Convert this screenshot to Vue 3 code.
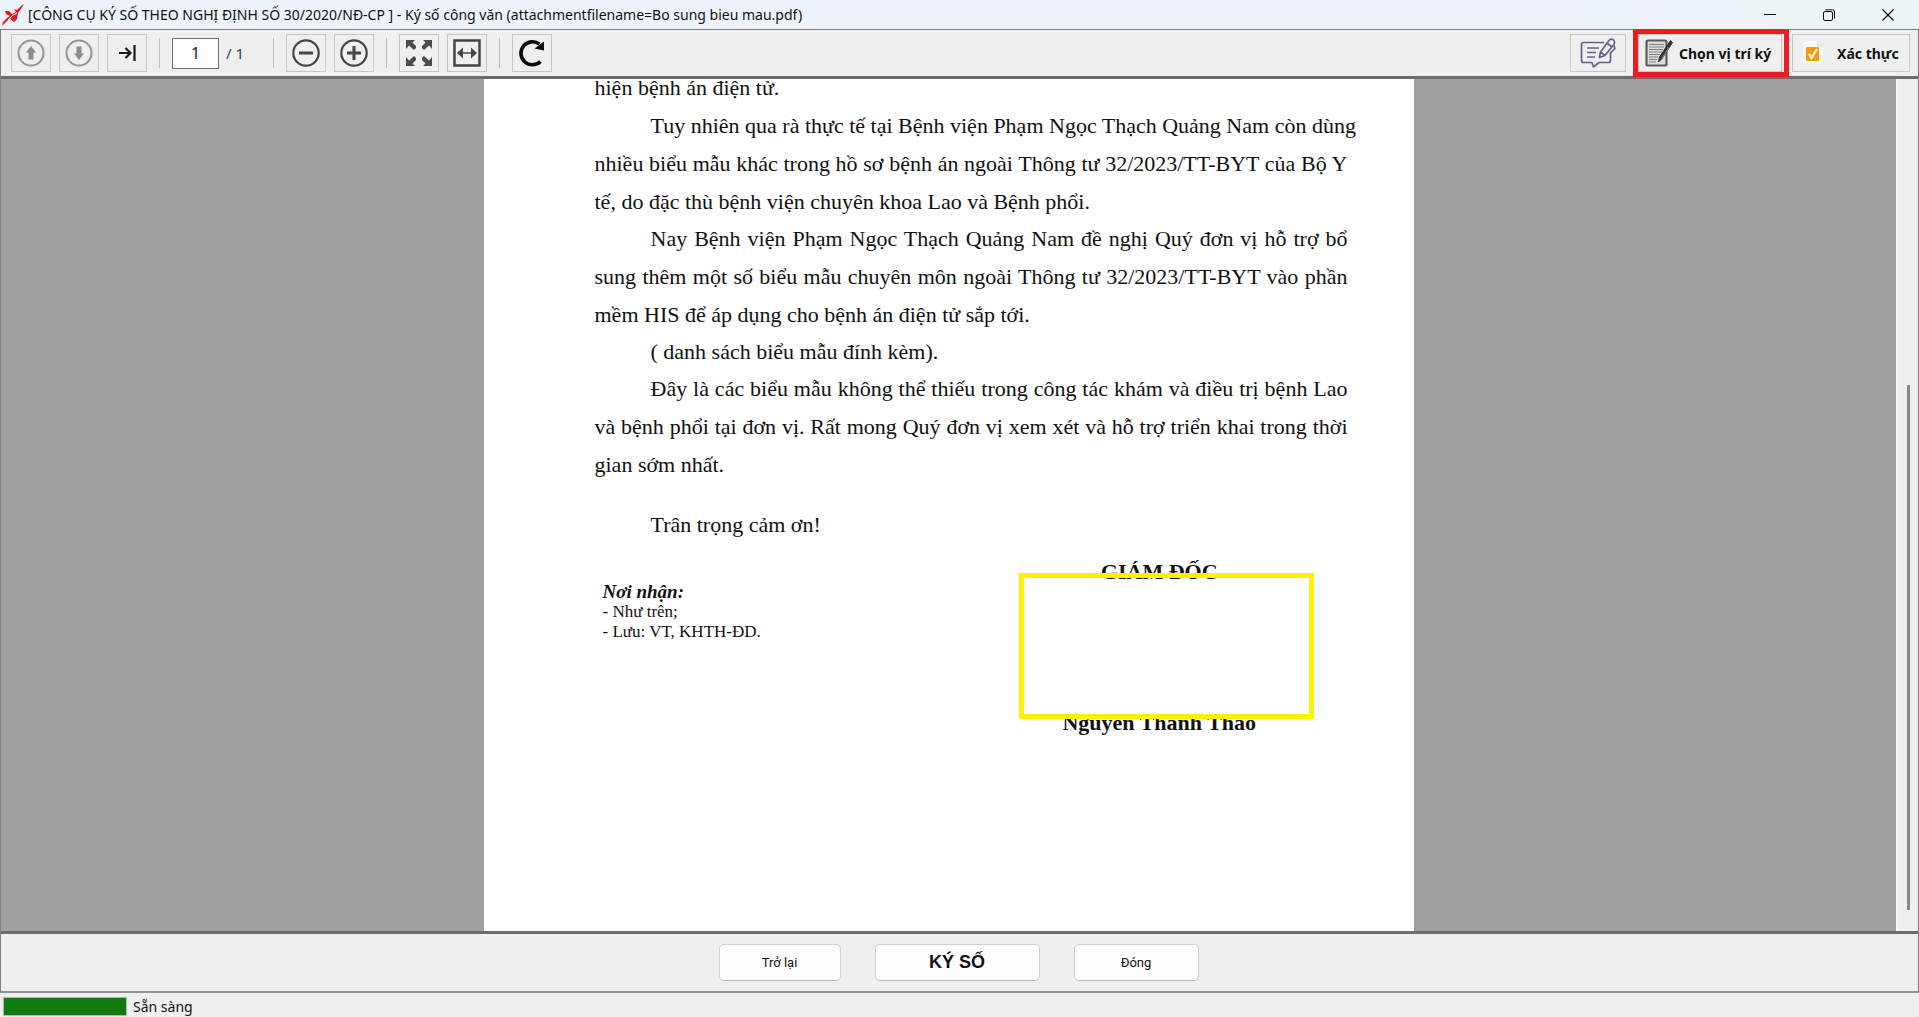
<script setup>
import { ref } from 'vue'

const page = ref('1')

const paragraphs = [
  [
    'Tuy nhiên qua rà thực tế tại Bệnh viện Phạm Ngọc Thạch Quảng Nam còn dùng',
    'nhiều biểu mẫu khác trong hồ sơ bệnh án ngoài Thông tư 32/2023/TT-BYT của Bộ Y',
    'tế, do đặc thù bệnh viện chuyên khoa Lao và Bệnh phổi.'
  ],
  [
    'Nay Bệnh viện Phạm Ngọc Thạch Quảng Nam đề nghị Quý đơn vị hỗ trợ bổ',
    'sung thêm một số biểu mẫu chuyên môn ngoài Thông tư 32/2023/TT-BYT vào phần',
    'mềm HIS để áp dụng cho bệnh án điện tử sắp tới.'
  ],
  ['( danh sách biểu mẫu đính kèm).'],
  [
    'Đây là các biểu mẫu không thể thiếu trong công tác khám và điều trị bệnh Lao',
    'và bệnh phổi tại đơn vị. Rất mong Quý đơn vị xem xét và hỗ trợ triển khai trong thời',
    'gian sớm nhất.'
  ]
]
</script>

<template>
  <div class="window">
    <header class="titlebar">
      <svg class="logo" width="22" height="24" viewBox="0 0 22 24" aria-hidden="true">
        <path d="M0 23L1 19L5 15L8 13L4 11L3 8L7 8L10 11L14 9L12 6L15 7L19 3L22 1L19 6L16 10L15 16L12 19L9 17L9 15L5 18L1 22Z" fill="#dd1c1c" />
        <path d="M6 17L11 12L15 10" fill="none" stroke="#eef3fa" />
      </svg>
      <h1 class="title">[CÔNG CỤ KÝ SỐ THEO NGHỊ ĐỊNH SỐ 30/2020/NĐ-CP ] - Ký số công văn (attachmentfilename=Bo sung bieu mau.pdf)</h1>
      <div class="controls">
        <button aria-label="Thu nhỏ">
          <svg width="12" height="12" viewBox="0 0 12 12"><path d="M0 5.500H12" stroke="#111" /></svg>
        </button>
        <button aria-label="Khôi phục">
          <svg width="12" height="12" viewBox="0 0 12 12" fill="none" stroke="#111">
            <rect x=".5" y="2.500" width="9" height="9" rx="1.500" />
            <path d="M2.500 .8H9.500Q11.500 .8 11.500 2.800V9.500" />
          </svg>
        </button>
        <button aria-label="Đóng cửa sổ">
          <svg width="12" height="12" viewBox="0 0 12 12"><path d="M.5 .5L11.500 11.500M11.500 .5L.5 11.500" stroke="#111" stroke-width="1.200" /></svg>
        </button>
      </div>
    </header>

    <div class="frame">
      <div class="toolbar">
        <div class="group">
          <button class="tool" aria-label="Trang trước">
            <svg width="28" height="28" viewBox="0 0 28 28">
              <circle cx="14" cy="14" r="12.500" fill="none" stroke="#949494" stroke-width="2" />
              <path d="M14 7L19 13.500H16.500V20.500H11.500V13.500H9Z" fill="#8c8c8c" />
            </svg>
          </button>
          <button class="tool" aria-label="Trang sau">
            <svg width="28" height="28" viewBox="0 0 28 28">
              <circle cx="14" cy="14" r="12.500" fill="none" stroke="#949494" stroke-width="2" />
              <path d="M14 21L19 14.500H16.500V7.500H11.500V14.500H9Z" fill="#8c8c8c" />
            </svg>
          </button>
          <button class="tool" aria-label="Trang cuối">
            <svg width="18" height="16" viewBox="0 0 18 16" fill="none" stroke="#1c1c1c" stroke-width="2.200">
              <path d="M1 8H12M7.500 3L12.500 8L7.500 13M16.500 0V16" />
            </svg>
          </button>
        </div>
        <span class="sep"></span>
        <div class="pager">
          <input v-model="page" class="page-input" aria-label="Số trang" />
          <span>/ 1</span>
        </div>
        <span class="sep"></span>
        <div class="group">
          <button class="tool" aria-label="Thu nhỏ trang">
            <svg width="28" height="28" viewBox="0 0 28 28" fill="none" stroke="#454545">
              <circle cx="14" cy="14" r="12.700" stroke-width="2.200" />
              <path d="M7 14H21" stroke-width="3" />
            </svg>
          </button>
          <button class="tool" aria-label="Phóng to trang">
            <svg width="28" height="28" viewBox="0 0 28 28" fill="none" stroke="#454545">
              <circle cx="14" cy="14" r="12.700" stroke-width="2.200" />
              <path d="M7 14H21M14 7V21" stroke-width="3" />
            </svg>
          </button>
        </div>
        <span class="sep"></span>
        <div class="group">
          <button class="tool" aria-label="Vừa trang">
            <svg width="26" height="26" viewBox="0 0 26 26" fill="#4c4c4c">
              <path d="M0 0H9L6.500 2.500L10 6V8L8 10L3 5.500L0 9Z" />
              <path d="M26 0V9L23 5.500L18 10L16 8V6L19.500 2.500L17 0Z" />
              <path d="M0 26V17L3 20.500L8 16L10 18V20L6.500 23.500L9 26Z" />
              <path d="M26 26H17L19.500 23.500L16 20V18L18 16L23 20.500L26 17Z" />
            </svg>
          </button>
          <button class="tool" aria-label="Vừa chiều rộng">
            <svg width="28" height="28" viewBox="0 0 28 28">
              <rect x="1.500" y="1.500" width="25" height="25" fill="none" stroke="#454545" stroke-width="2.500" />
              <path d="M8 14H20" stroke="#454545" stroke-width="1.500" />
              <path d="M4 14L10 8.500V19.500ZM24 14L18 8.500V19.500Z" fill="#454545" />
            </svg>
          </button>
        </div>
        <span class="sep"></span>
        <button class="tool" aria-label="Xoay trang">
          <svg width="28" height="28" viewBox="0 0 28 28">
            <path d="M22.500 22.500A11.500 11.500 0 1 1 21.500 5.200" fill="none" stroke="#0c0c0c" stroke-width="3.600" />
            <path d="M26 2.500V11.500L16.500 9.500Z" fill="#0c0c0c" />
          </svg>
        </button>

        <div class="actions">
          <button class="tool note" aria-label="Ghi chú">
            <svg width="36" height="30" viewBox="0 0 36 30" fill="none" stroke="#65618f" stroke-width="1.700" stroke-linejoin="round">
              <path d="M24 4.500H3.500Q1.500 4.500 1.500 6.500V22.500Q1.500 24.500 3.500 24.500H12L13.500 29L19 24.500H28.500Q30.500 24.500 30.500 22.500V15" />
              <path d="M7 10H19M7 14.500H16M7 19H15" />
              <path d="M19.500 19.500L20.500 14L29 2.500Q31 0 33.500 2Q35.500 4 33.800 6.500L25 17.500ZM27 5L32 9M20.500 14L25 17.500M34 7.500L35 10.500L30 15.500" />
            </svg>
          </button>
          <div class="highlight">
            <button class="tool labelled pick">
              <svg width="28" height="28" viewBox="0 0 28 28">
                <rect x="1.500" y="1.500" width="20" height="25" rx="1.500" fill="#dcdcdc" stroke="#5c5c5c" stroke-width="2.200" />
                <path d="M4 5.500H19M4 8H19M4 10.500H18M4 13H17M4 15.500H15M4 18H13M4 20.500H12M4 23H11" stroke="#808080" />
                <path d="M25.500 1.500L27.500 3.500L17 19.500L13.500 23L14.500 18Z" fill="#303030" stroke="#303030" stroke-linejoin="round" />
                <path d="M22 8L23.500 9L17 19" fill="none" stroke="#8c8c8c" />
              </svg>
              <span>Chọn vị trí ký</span>
            </button>
          </div>
          <button class="tool labelled verify">
            <svg width="24" height="24" viewBox="0 0 24 24">
              <path d="M2 0H16L22 6V23H2Z" fill="#f9f9f9" />
              <path d="M16 0V6H22" fill="#e7e7e7" />
              <rect x="5" y="6" width="13" height="14" rx="1" fill="#fb9a12" />
              <path d="M8 13L10.500 17L16 8" fill="none" stroke="#fff" stroke-width="2" />
            </svg>
            <span>Xác thực</span>
          </button>
        </div>
      </div>

      <main class="viewer">
        <div class="canvas">
          <article class="sheet">
            <p>hiện bệnh án điện tử.</p>
            <p v-for="(lines, i) in paragraphs" :key="i" class="indent">
              <span v-for="line in lines" :key="line" class="line">{{ line }}</span>
            </p>
            <p class="thanks">Trân trọng cảm ơn!</p>
            <div class="closing">
              <div class="recipients">
                <strong>Nơi nhận:</strong>
                <span>- Như trên;</span>
                <span>- Lưu: VT, KHTH-ĐD.</span>
              </div>
              <div class="signature">
                <strong>GIÁM ĐỐC</strong>
                <strong>Nguyễn Thanh Thảo</strong>
                <div class="sign-area"></div>
              </div>
            </div>
          </article>
        </div>
        <div class="scrollbar"><div class="thumb"></div></div>
      </main>

      <div class="footer">
        <button class="cmd back">Trở lại</button>
        <button class="cmd sign">KÝ SỐ</button>
        <button class="cmd close">Đóng</button>
      </div>
    </div>

    <footer class="status">
      <div class="progress"></div>
      <span>Sẵn sàng</span>
    </footer>
  </div>
</template>

<style>
body {
  margin: 0;
}
</style>

<style scoped>
.window {
  display: flex;
  flex-direction: column;
  height: 100vh;
  overflow: hidden;
  background: #efefef;
  color: #111;
  font-family: "Noto Sans", "Open Sans", sans-serif;
}
* {
  box-sizing: border-box;
}
button {
  padding: 0;
  font-family: inherit;
  color: inherit;
}
svg {
  display: block;
  flex: none;
}
.titlebar {
  display: flex;
  align-items: center;
  flex: none;
  height: 29px;
  padding: 0 9px 0 2px;
  gap: 4px;
  background: linear-gradient(90deg, #eef3fb 80%, #ebf5f7);
}
.title {
  margin: 0;
  font-size: 14px;
  font-weight: 400;
  white-space: nowrap;
}
.controls {
  display: flex;
  margin-left: auto;
  gap: 14px;
}
.controls button {
  display: flex;
  align-items: center;
  justify-content: center;
  width: 45px;
  height: 28px;
  border: 0;
  background: none;
}
.frame {
  display: flex;
  flex-direction: column;
  flex: 1;
  min-height: 0;
  border: 1px solid #808080;
  border-bottom: 2px solid #929292;
}
.toolbar {
  display: flex;
  align-items: center;
  flex: none;
  height: 49px;
  padding: 0 8px 0 10px;
  border-bottom: 3px solid #6c6c6c;
}
.group {
  display: flex;
  gap: 8px;
}
.tool {
  display: flex;
  align-items: center;
  justify-content: center;
  flex: none;
  width: 40px;
  height: 38px;
  border: 1px solid #c6c6c6;
  background: #efefef;
}
.sep {
  width: 1px;
  height: 30px;
  margin: 0 12px;
  background: #bdbdbd;
}
.pager {
  display: flex;
  align-items: center;
  gap: 7px;
  width: 89px;
  font-size: 15px;
  color: #24466a;
}
.page-input {
  width: 47px;
  height: 31px;
  padding: 0;
  border: 1px solid #6e6e6e;
  border-radius: 0;
  background: #fff;
  font: 16px "Noto Sans", sans-serif;
  text-align: center;
  color: #222;
}
.actions {
  display: flex;
  align-items: center;
  margin-left: auto;
}
.note {
  width: 56px;
  margin-right: 7px;
}
.highlight {
  margin-right: 3px;
  padding-right: 2px;
  border: 5px solid #ed1c24;
}
.labelled {
  font-size: 14px;
  font-weight: 700;
  white-space: nowrap;
}
.pick {
  justify-content: flex-start;
  width: 144px;
  padding-left: 6px;
  gap: 6px;
}
.verify {
  justify-content: flex-start;
  width: 118px;
  padding-left: 8px;
  gap: 12px;
}
.viewer {
  display: flex;
  flex: 1;
  min-height: 0;
  border-bottom: 3px solid #6c6c6c;
}
.canvas {
  flex: 1;
  overflow: hidden;
  background: #a0a0a0;
}
.sheet {
  width: 930px;
  min-height: 110%;
  margin: -10px auto 0;
  padding: 0 66px 0 111px;
  background: #fefefe;
  color: #111;
  font-family: "Liberation Serif", "Times New Roman", serif;
  font-size: 22px;
  line-height: 38px;
}
.sheet p {
  margin: 0;
}
.line {
  display: block;
  white-space: nowrap;
  text-align-last: justify;
}
.line:last-child {
  text-align-last: left;
}
.line:first-child {
  padding-left: 56px;
}
.indent + .indent {
  margin-top: -1px;
}
.sheet .thanks {
  margin-top: 22px;
  padding-left: 56px;
}
.closing {
  display: grid;
  grid-template-columns: 1fr 1fr;
  padding-top: 15px;
}
.recipients {
  display: flex;
  flex-direction: column;
  padding: 23px 0 0 8px;
  font-size: 17px;
  line-height: 20px;
}
.recipients strong {
  font-size: 19px;
  font-style: italic;
}
.signature {
  position: relative;
  display: flex;
  flex-direction: column;
  align-items: center;
  gap: 125px;
  line-height: 26px;
}
.sign-area {
  position: absolute;
  top: 14px;
  left: 48px;
  width: 295px;
  height: 146px;
  border: 5px solid #fff200;
}
.scrollbar {
  display: flex;
  justify-content: center;
  width: 22px;
  padding: 306px 0 21px;
  border-left: 2px solid #f8f8f8;
}
.thumb {
  width: 3px;
  background: #888;
}
.footer {
  display: flex;
  align-items: center;
  justify-content: center;
  flex: none;
  height: 57px;
  gap: 34px;
  padding: 0 2px 1px 0;
}
.cmd {
  height: 37px;
  border: 1px solid #d0d0d0;
  border-bottom-color: #bcbcbc;
  border-radius: 5px;
  background: #fdfdfd;
  font-family: Roboto, sans-serif;
  font-size: 13px;
}
.back {
  width: 122px;
}
.sign {
  width: 165px;
  font-family: "Liberation Sans", Arial, sans-serif;
  font-size: 18px;
  font-weight: 700;
}
.close {
  width: 125px;
}
.status {
  display: flex;
  align-items: center;
  flex: none;
  height: 24px;
  gap: 6px;
  padding: 2px 0 0 3px;
  font-size: 14px;
}
.progress {
  width: 124px;
  height: 19px;
  border: 1px solid #b0b8b0;
  background: #107c10;
}
</style>
